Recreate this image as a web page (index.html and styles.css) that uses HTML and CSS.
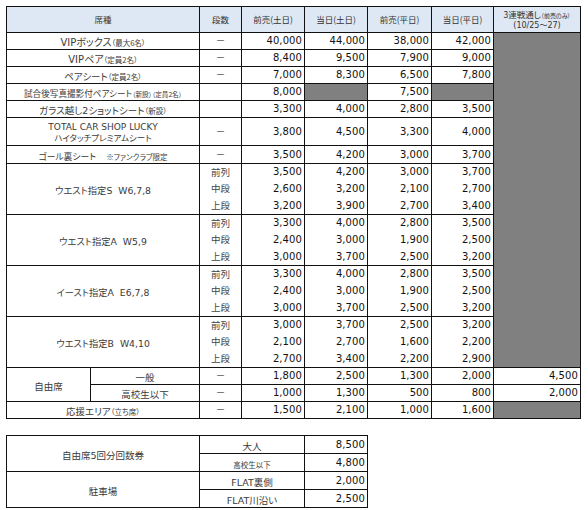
FILE: index.html
```html
<!DOCTYPE html>
<html lang="ja">
<head>
<meta charset="utf-8">
<title>料金表</title>
<link rel="stylesheet" href="styles.css">
</head>
<body>
<table class="price">
  <colgroup>
    <col class="w-a"><col class="w-b"><col class="w-dan"><col class="w-n1"><col class="w-n2"><col class="w-n3"><col class="w-n4"><col class="w-all">
  </colgroup>
  <thead>
    <tr class="h-head">
      <th colspan="2">席種</th>
      <th>段数</th>
      <th>前売(土日)</th>
      <th>当日(土日)</th>
      <th>前売(平日)</th>
      <th>当日(平日)</th>
      <th class="hd-all"><span class="hd-l1">3連戦通し<small>（前売のみ）</small></span><span class="hd-l2">(10/25～27)</span></th>
    </tr>
  </thead>
  <tbody>
    <tr class="h17">
      <td colspan="2" class="seat"><span class="t10">VIPボックス</span><small>（最大6名）</small></td>
      <td class="dan">－</td>
      <td class="num">40,000</td><td class="num">44,000</td><td class="num">38,000</td><td class="num">42,000</td>
      <td rowspan="19" class="gray"></td>
    </tr>
    <tr class="h17">
      <td colspan="2" class="seat"><span class="t10">VIPペア</span><small>（定員2名）</small></td>
      <td class="dan">－</td>
      <td class="num">8,400</td><td class="num">9,500</td><td class="num">7,900</td><td class="num">9,000</td>
    </tr>
    <tr class="h17">
      <td colspan="2" class="seat"><span class="t9">ペアシート</span><small>（定員2名）</small></td>
      <td class="dan">－</td>
      <td class="num">7,000</td><td class="num">8,300</td><td class="num">6,500</td><td class="num">7,800</td>
    </tr>
    <tr class="h17">
      <td colspan="2" class="seat"><span class="t86">試合後写真撮影付ペアシート</span><small class="sm65">（新設）（定員2名）</small></td>
      <td class="dan"></td>
      <td class="num">8,000</td><td class="gray"></td><td class="num">7,500</td><td class="gray"></td>
    </tr>
    <tr class="h17">
      <td colspan="2" class="seat"><span class="t9">ガラス越し2ショットシート</span><small>（新設）</small></td>
      <td class="dan"></td>
      <td class="num">3,300</td><td class="num">4,000</td><td class="num">2,800</td><td class="num">3,500</td>
    </tr>
    <tr class="h28">
      <td colspan="2" class="seat seat-2l"><span class="t-latin">TOTAL CAR SHOP LUCKY</span><span class="t85">ハイタッチプレミアムシート</span></td>
      <td class="dan">－</td>
      <td class="num">3,800</td><td class="num">4,500</td><td class="num">3,300</td><td class="num">4,000</td>
    </tr>
    <tr class="h18">
      <td colspan="2" class="seat"><span class="t88">ゴール裏シート</span>&nbsp;&nbsp;<small>※ファンクラブ限定</small></td>
      <td class="dan">－</td>
      <td class="num">3,500</td><td class="num">4,200</td><td class="num">3,000</td><td class="num">3,700</td>
    </tr>

    <tr class="h17 s1">
      <td colspan="2" rowspan="3" class="seat grp"><span class="t93">ウエスト指定S&nbsp;&nbsp;W6,7,8</span></td>
      <td class="dan">前列</td>
      <td class="num">3,500</td><td class="num">4,200</td><td class="num">3,000</td><td class="num">3,700</td>
    </tr>
    <tr class="h17 s2">
      <td class="dan">中段</td>
      <td class="num">2,600</td><td class="num">3,200</td><td class="num">2,100</td><td class="num">2,700</td>
    </tr>
    <tr class="h17 s3">
      <td class="dan">上段</td>
      <td class="num">3,200</td><td class="num">3,900</td><td class="num">2,700</td><td class="num">3,400</td>
    </tr>

    <tr class="h17 s1">
      <td colspan="2" rowspan="3" class="seat grp"><span class="t93">ウエスト指定A&nbsp;&nbsp;W5,9</span></td>
      <td class="dan">前列</td>
      <td class="num">3,300</td><td class="num">4,000</td><td class="num">2,800</td><td class="num">3,500</td>
    </tr>
    <tr class="h17 s2">
      <td class="dan">中段</td>
      <td class="num">2,400</td><td class="num">3,000</td><td class="num">1,900</td><td class="num">2,500</td>
    </tr>
    <tr class="h17 s3">
      <td class="dan">上段</td>
      <td class="num">3,000</td><td class="num">3,700</td><td class="num">2,500</td><td class="num">3,200</td>
    </tr>

    <tr class="h17 s1">
      <td colspan="2" rowspan="3" class="seat grp"><span class="t93">イースト指定A&nbsp;&nbsp;E6,7,8</span></td>
      <td class="dan">前列</td>
      <td class="num">3,300</td><td class="num">4,000</td><td class="num">2,800</td><td class="num">3,500</td>
    </tr>
    <tr class="h17 s2">
      <td class="dan">中段</td>
      <td class="num">2,400</td><td class="num">3,000</td><td class="num">1,900</td><td class="num">2,500</td>
    </tr>
    <tr class="h17 s3">
      <td class="dan">上段</td>
      <td class="num">3,000</td><td class="num">3,700</td><td class="num">2,500</td><td class="num">3,200</td>
    </tr>

    <tr class="h17 s1">
      <td colspan="2" rowspan="3" class="seat grp"><span class="t93">ウエスト指定B&nbsp;&nbsp;W4,10</span></td>
      <td class="dan">前列</td>
      <td class="num">3,000</td><td class="num">3,700</td><td class="num">2,500</td><td class="num">3,200</td>
    </tr>
    <tr class="h17 s2">
      <td class="dan">中段</td>
      <td class="num">2,100</td><td class="num">2,700</td><td class="num">1,600</td><td class="num">2,200</td>
    </tr>
    <tr class="h17 s3">
      <td class="dan">上段</td>
      <td class="num">2,700</td><td class="num">3,400</td><td class="num">2,200</td><td class="num">2,900</td>
    </tr>

    <tr class="h17">
      <td rowspan="2" class="seat"><span class="t9">自由席</span></td>
      <td class="seat"><span class="t9">一般</span></td>
      <td class="dan">－</td>
      <td class="num">1,800</td><td class="num">2,500</td><td class="num">1,300</td><td class="num">2,000</td>
      <td class="num">4,500</td>
    </tr>
    <tr class="h17">
      <td class="seat"><span class="t9">高校生以下</span></td>
      <td class="dan">－</td>
      <td class="num">1,000</td><td class="num">1,300</td><td class="num">500</td><td class="num">800</td>
      <td class="num">2,000</td>
    </tr>
    <tr class="h17">
      <td colspan="2" class="seat"><span class="t9">応援エリア</span><small>（立ち席）</small></td>
      <td class="dan">－</td>
      <td class="num">1,500</td><td class="num">2,100</td><td class="num">1,000</td><td class="num">1,600</td>
      <td class="gray"></td>
    </tr>
  </tbody>
</table>

<table class="extra">
  <colgroup>
    <col class="w-x1"><col class="w-x2"><col class="w-x3">
  </colgroup>
  <tbody>
    <tr class="h18">
      <td rowspan="2" class="seat"><span class="t9">自由席5回分回数券</span></td>
      <td class="seat"><span class="t9">大人</span></td>
      <td class="num">8,500</td>
    </tr>
    <tr class="h18">
      <td class="seat"><span class="t75">高校生以下</span></td>
      <td class="num">4,800</td>
    </tr>
    <tr class="h18">
      <td rowspan="2" class="seat"><span class="t9">駐車場</span></td>
      <td class="seat"><span class="t9">FLAT裏側</span></td>
      <td class="num">2,000</td>
    </tr>
    <tr class="h18">
      <td class="seat"><span class="t9">FLAT川沿い</span></td>
      <td class="num">2,500</td>
    </tr>
  </tbody>
</table>
</body>
</html>
```

FILE: styles.css
```css
html, body {
  margin: 0;
  background: #ffffff;
}

body {
  padding: 6px 0 0 6px;
  font-family: "DejaVu Sans", "Noto Sans CJK JP", sans-serif;
  color: #333333;
}

table {
  border-collapse: collapse;
  table-layout: fixed;
}

td, th {
  border: 1px solid #111111;
  padding: 0 2px;
  font-weight: normal;
  white-space: nowrap;
  overflow: hidden;
  line-height: 1;
  vertical-align: middle;
}

.price { width: 575px; }
.extra { width: 362px; margin-top: 16px; }

.w-a { width: 84px; }
.w-b { width: 109px; }
.w-dan { width: 42px; }
.w-n1 { width: 63px; }
.w-n2 { width: 63px; }
.w-n3 { width: 64px; }
.w-n4 { width: 62px; }
.w-all { width: 87px; }

.w-x1 { width: 193px; }
.w-x2 { width: 105px; }
.w-x3 { width: 63px; }

.h-head { height: 26px; }
.h17 { height: 17px; }
.h18 { height: 18px; }
.h28 { height: 28px; }

.h-head th {
  background: #dde8f4;
  font-family: "Noto Sans CJK JP", sans-serif;
  font-feature-settings: "palt";
  font-size: 8.5px;
  color: #333333;
  text-align: center;
}

.hd-all {
  padding: 0;
}

.hd-l1, .hd-l2 {
  display: block;
  line-height: 10px;
}

.hd-l1 small {
  font-size: 6px;
}

.hd-l2 {
  font-family: "DejaVu Sans", "Noto Sans CJK JP", sans-serif;
  font-size: 8px;
}

.seat {
  text-align: center;
  font-family: "DejaVu Sans", "Noto Sans CJK JP", sans-serif;
  font-feature-settings: "palt";
  color: #3a3a3a;
}

.seat small {
  font-family: "Noto Sans CJK JP", sans-serif;
  font-feature-settings: "palt";
  font-size: 7.5px;
}

.seat small.sm65 { font-size: 6.6px; }

.t10 { font-size: 10px; }
.t9 { font-size: 9.5px; }
.t93 { font-size: 9.3px; }
.t86 { font-size: 8.6px; }
.t88 { font-size: 8.8px; }
.t-latin { font-size: 9px; }
.t85 { font-size: 8.5px; font-family: "Noto Sans CJK JP", sans-serif; }
.t75 { font-size: 7.5px; font-family: "Noto Sans CJK JP", sans-serif; }

.seat-2l span {
  display: block;
  line-height: 10px;
}

.dan {
  text-align: center;
  font-family: "Noto Sans CJK JP", sans-serif;
  font-size: 9.5px;
  color: #444444;
}

.num {
  text-align: right;
  font-family: "DejaVu Sans", sans-serif;
  font-size: 10px;
  color: #111111;
  letter-spacing: 0.1px;
}

.gray {
  background: #808080;
}

.s1 td:not(.grp) { border-bottom: none; }
.s2 td { border-top: none; border-bottom: none; }
.s3 td { border-top: none; }
```
